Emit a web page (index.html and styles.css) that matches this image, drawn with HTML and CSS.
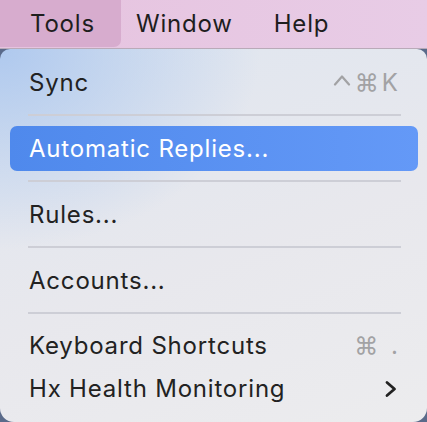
FILE: index.html
```html
<!DOCTYPE html>
<html lang="en">

<head>
  <meta charset="UTF-8">
  <meta name="viewport" content="width=device-width, initial-scale=1.0">
  <title>Tools menu</title>
  <link rel="stylesheet" href="styles.css">
</head>

<body>
  <nav class="menubar">
    <div class="menubar-item active">Tools</div>
    <div class="menubar-item">Window</div>
    <div class="menubar-item">Help</div>
  </nav>
  <div class="menu">
    <div class="menu-item">
      <span>Sync</span>
      <span class="shortcut">
        <svg class="caret" width="18" height="12" viewBox="0 0 18 12">
          <path d="M2 10.5 L9 2.5 L16 10.5" fill="none" stroke="#a2a2a4" stroke-width="2.2" stroke-linecap="round" stroke-linejoin="round"/>
        </svg>&#8984;K</span>
    </div>
    <hr class="separator">
    <div class="menu-item selected">
      <span>Automatic Replies...</span>
    </div>
    <hr class="separator">
    <div class="menu-item">
      <span>Rules...</span>
    </div>
    <hr class="separator">
    <div class="menu-item">
      <span>Accounts...</span>
    </div>
    <hr class="separator">
    <div class="menu-item tight">
      <span>Keyboard Shortcuts</span>
      <span class="shortcut">&#8984; .</span>
    </div>
    <div class="menu-item tight">
      <span>Hx Health Monitoring</span>
      <svg class="chevron" width="14" height="18" viewBox="0 0 14 18">
        <path d="M3 2.5 L10.5 9 L3 15.5" fill="none" stroke="#222" stroke-width="2.8" stroke-linecap="round" stroke-linejoin="round"/>
      </svg>
    </div>
  </div>
</body>

</html>
```

FILE: styles.css
```css
*,
*::before,
*::after {
  box-sizing: border-box;
}
html,
body {
  height: 100%;
}
body {
  display: flex;
  flex-flow: column;
  margin: 0;
  overflow: hidden;
  background: #5a6a8a;
  font-family: "Inter", "Liberation Sans", sans-serif;
  color: #222;
}
.menubar {
  display: flex;
  height: 49px;
  background: linear-gradient(90deg, #e6c3df, #e8cce6);
  border-bottom: 1px solid #b9aab8;
}
.menubar-item {
  display: flex;
  align-items: center;
  height: 47px;
  padding: 0 26px 0 30px;
  font-size: 24px;
  letter-spacing: .8px;
  color: #1e1e1e;
}
.menubar-item.active {
  width: 121px;
  background: #d7acce;
  border-radius: 0 0 7px 0;
}
.menubar-item + .menubar-item {
  padding-left: 15px;
}
.menu {
  flex: 1;
  display: flex;
  flex-flow: column;
  padding: 11px 9px 0 10px;
  background:
    radial-gradient(ellipse 260px 200px at 0 0, rgba(170, 198, 238, .9), rgba(170, 198, 238, 0)),
    linear-gradient(160deg, #dfe6f0, #e8e8ed 55%, #ececee);
  border-radius: 10px 10px 14px 14px;
}
.menu-item {
  display: flex;
  align-items: center;
  justify-content: space-between;
  height: 45px;
  padding: 0 20px 0 19px;
  font-size: 24px;
  letter-spacing: .8px;
  border-radius: 7px;
}
.menu-item.tight {
  height: 43px;
}
.menu-item.selected {
  background: linear-gradient(90deg, #4f89ec, #6499f7);
  color: #fff;
}
.shortcut {
  display: flex;
  align-items: center;
  color: #a2a2a4;
  letter-spacing: 3px;
  margin-right: -3px;
}
.caret {
  margin: 0 4px 6px 0;
}
.separator {
  height: 2px;
  margin: 9px 17px 10px 18px;
  border: 0;
  background: #cdced6;
}
```
